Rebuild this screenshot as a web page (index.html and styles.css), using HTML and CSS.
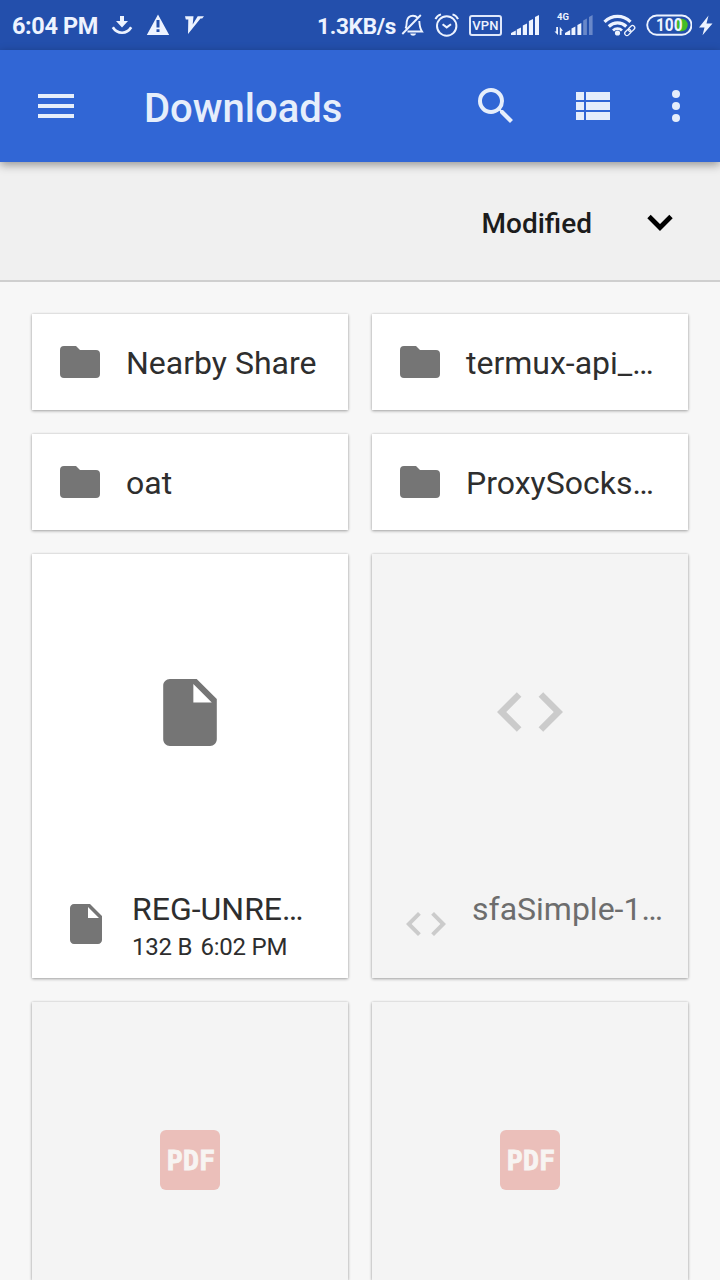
FILE: index.html
```html
<!DOCTYPE html>
<html lang="en">
<head>
<meta charset="utf-8">
<title>Downloads</title>
<link rel="stylesheet" href="styles.css">
</head>
<body>
<svg class="defs" width="0" height="0" aria-hidden="true">
  <symbol id="folder" viewBox="0 0 40 32"><path d="M4 0h12l4 4h16a4 4 0 0 1 4 4v20a4 4 0 0 1-4 4H4a4 4 0 0 1-4-4V4a4 4 0 0 1 4-4z"/></symbol>
  <symbol id="file" viewBox="4 2 16 20"><path d="M6 2c-1.100 0-2 .9-2 2v16c0 1.100.9 2 2 2h12c1.100 0 2-.9 2-2V8l-6-6H6zm7 7V3.500L18.500 9H13z"/></symbol>
  <symbol id="code" viewBox="2 6 20 12"><path d="M9.400 16.600 4.800 12l4.600-4.600L8 6l-6 6 6 6 1.400-1.400zm5.200 0 4.600-4.600-4.600-4.600L16 6l6 6-6 6-1.400-1.400z"/></symbol>
</svg>

<header class="status">
  <span class="time">6:04 PM</span>
  <svg class="download" width="22" height="22" viewBox="111 14 22 22"><path d="M120 16h4v5h4l-6 6.500-6-6.500h4z" fill="currentColor"/><path d="M112.800 27.300c4.500 7.200 14 7.200 18.400 0" fill="none" stroke="currentColor" stroke-width="2.600"/></svg>
  <svg class="warning" width="24" height="22" viewBox="146 14 24 22"><path fill-rule="evenodd" d="M158 14.500 169.200 35H146.800zM156.500 20v7.500h3V20zm0 9.200V32h3v-2.800z" fill="currentColor"/></svg>
  <svg class="vee" width="22" height="22" viewBox="183 14 22 22"><path d="M185 16.200h8.500l-.8 8.300 5-8.300h6.300l-1.800 2.200h-1.700L188 34l.3-14.500h-2.500z" fill="currentColor"/></svg>

  <span class="speed">1.3KB/s</span>
  <svg class="bell" width="24" height="24" viewBox="401 13 24 24" fill="none" stroke="currentColor" stroke-width="1.900"><path d="M405.500 28.500c1.300-2 1-4.500 1.300-7 .5-3.500 3-5.700 6.200-5.700 2 0 3.500.8 4.500 1.900M419.300 21c.3 4 .3 7 2.700 10.500h-14.500M402.300 34l18.500-19"/><path d="M410.200 33.500h5.800c-.5 3-5.300 3-5.800 0z" fill="currentColor" stroke="none"/></svg>
  <svg class="alarm" width="26" height="26" viewBox="434 12 26 26" fill="none" stroke="currentColor" stroke-width="2"><circle cx="446.700" cy="26" r="9.700"/><path d="m442.600 24.200 4.100 3.200 4.300-3.200M435.500 19.200c1-2.500 2.800-4 5.500-4.800M458 19.200c-1-2.500-2.800-4-5.500-4.800"/></svg>
  <span class="vpn">VPN</span>
  <svg class="signal" width="30" height="22" viewBox="510 14 30 22" fill="currentColor"><path d="M511 35v-2l4.800-2.500V35zM516.800 29.500l4.200-2V35h-4.200zM522.800 25.500l4.200-2V35h-4.200zM528.900 21l4.100-2V35h-4.100zM535 17l4-2v20h-4z"/></svg>
  <svg class="signal2" width="40" height="24" viewBox="554 12 40 24" fill="currentColor"><text x="557" y="20.300" font-size="9.500" font-weight="700">4G</text><path d="M565 35v-2l5.200-3v5zM571.500 28.500l3.900-2V35h-3.900zM577.400 25l3.900-2V35h-3.900z"/><path d="M583.200 20.500l3.700-2V35h-3.700zM589 17l3.600-2v20H589z" opacity=".35"/><path d="M556.200 27h1.800v8l-3.500-3.500h1.700zM559.800 35h1.700v-4.300h1.500l-3.200-4z"/></svg>
  <svg class="wifi" width="34" height="24" viewBox="603 13 34 24" fill="none" stroke="currentColor" stroke-width="3.200"><path d="M604.500 21.800c7.500-7.200 18.500-7.200 26 0M608.800 26.500c5-4.800 12.500-4.800 17.500 0"/><path d="M613 30.500c2.500-2.500 6.500-2.500 9 0" stroke-width="2.800"/><circle cx="617.500" cy="33" r="2.600" fill="currentColor" stroke="none"/><g stroke-width="1.300" transform="rotate(-45 629.500 30.500)"><rect x="623.500" y="28.500" width="7" height="4.400" rx="2.200"/><rect x="628.800" y="28.500" width="7" height="4.400" rx="2.200"/></g></svg>
  <svg class="battery" width="46" height="22" viewBox="646 14 46 22"><path d="M677 18.800h4.500a6.200 6.200 0 0 1 0 12.400H677z" fill="#44bd25"/><rect x="647.200" y="15.500" width="44.300" height="19.200" rx="9.600" fill="none" stroke="currentColor" stroke-width="1.900"/><text x="656" y="31.200" font-size="18" font-weight="700" textLength="26.500" lengthAdjust="spacingAndGlyphs" fill="currentColor">100</text></svg>
  <svg class="bolt" width="14" height="22" viewBox="699 14 14 22"><path d="m708.500 15.500-9.500 12h5.500l-2 7.700 10-11.700h-6z" fill="currentColor"/></svg>
</header>

<header class="appbar">
  <svg class="menu" width="36" height="24" viewBox="0 0 36 24"><path d="M0 0h36v4H0zM0 10h36v4H0zM0 20h36v4H0z"/></svg>
  <h1>Downloads</h1>
  <svg class="search" width="36" height="36" viewBox="3 3 18 18"><path d="M15.500 14h-.79l-.28-.27A6.471 6.471 0 0 0 16 9.500 6.500 6.500 0 1 0 9.500 16c1.610 0 3.090-.59 4.230-1.570l.27.280v.79l5 4.990L20.490 19l-4.990-5zm-6 0C7.010 14 5 11.990 5 9.500S7.010 5 9.500 5 14 7.010 14 9.500 11.990 14 9.500 14z"/></svg>
  <svg class="list" width="34" height="28" viewBox="0 0 34 28"><path d="M0 0h8v8H0zM10 0h24v8H10zM0 10h8v8H0zM10 10h24v8H10zM0 20h8v8H0zM10 20h24v8H10z"/></svg>
  <svg class="more" width="8" height="32" viewBox="0 0 8 32"><circle cx="4" cy="4" r="4"/><circle cx="4" cy="16" r="4"/><circle cx="4" cy="28" r="4"/></svg>
</header>

<div class="sortbar">
  <span class="sort-label">Modified</span>
  <svg class="chevron" width="26" height="18" viewBox="0 0 26 18"><path d="m2 2.500 11 11 11-11" fill="none" stroke="#000" stroke-width="4.800"/></svg>
</div>

<main class="grid">
  <div class="card folder"><svg width="40" height="32"><use href="#folder"/></svg><span class="name">Nearby Share</span></div>
  <div class="card folder"><svg width="40" height="32"><use href="#folder"/></svg><span class="name">termux-api_…</span></div>
  <div class="card folder"><svg width="40" height="32"><use href="#folder"/></svg><span class="name">oat</span></div>
  <div class="card folder"><svg width="40" height="32"><use href="#folder"/></svg><span class="name">ProxySocks…</span></div>

  <div class="card doc">
    <div class="thumb"><svg width="54" height="67"><use href="#file"/></svg></div>
    <div class="info">
      <div class="mini"><svg width="32" height="40"><use href="#file"/></svg></div>
      <div class="text"><div class="name">REG-UNRE…</div><div class="meta"><span>132 B</span><span>6:02 PM</span></div></div>
    </div>
  </div>
  <div class="card doc disabled">
    <div class="thumb"><svg width="66" height="40"><use href="#code"/></svg></div>
    <div class="info">
      <div class="mini"><svg width="40" height="24"><use href="#code"/></svg></div>
      <div class="text"><div class="name">sfaSimple-1…</div></div>
    </div>
  </div>
  <div class="card partial disabled"><span class="pdf">PDF</span></div>
  <div class="card partial disabled"><span class="pdf">PDF</span></div>
</main>
</body>
</html>
```
FILE: styles.css
```css
* { box-sizing: border-box; }
body {
  margin: 0;
  width: 720px;
  height: 1280px;
  overflow: hidden;
  background: #f7f7f7;
  color: #2e2e2e;
  font-family: Roboto, "Noto Sans", sans-serif;
}
svg { display: block; flex: none; }
.defs { position: absolute; }

.status {
  display: flex;
  align-items: flex-start;
  height: 50px;
  background: #234fac;
  color: #edf3ff;
}
.status svg { margin-top: 14px; font-family: Roboto, sans-serif; }
.time, .speed {
  flex: none;
  font-weight: 700;
  line-height: 28px;
  margin-top: 12px;
  white-space: nowrap;
}
.time { width: 99px; padding-left: 12px; font-size: 23.5px; letter-spacing: -.4px; }
.status .download { margin-left: 12px; }
.status .warning { margin-left: 13px; }
.status .vee { margin-left: 13px; }
.speed { width: 84px; margin-left: 112px; font-size: 22.5px; letter-spacing: -.25px; }
.status .bell { margin-top: 13px; }
.status .alarm { margin: 12px 0 0 9px; }
.vpn {
  flex: none;
  width: 33px;
  height: 21px;
  margin: 15px 0 0 9px;
  border: 2px solid #dfe8fb;
  border-radius: 3px;
  font-size: 13px;
  font-weight: 500;
  letter-spacing: .2px;
  line-height: 18px;
  text-align: center;
}
.status .signal { margin-left: 8px; }
.status .signal2 { margin: 12px 0 0 14px; }
.status .wifi { margin: 13px 0 0 9px; }
.status .battery { margin-left: 9px; }
.status .bolt { margin-left: 7px; }

.appbar {
  position: relative;
  display: flex;
  align-items: flex-start;
  height: 112px;
  background: #3166d5;
  color: #e6eefb;
  fill: #e6eefb;
  box-shadow: 0 3px 9px rgba(0, 0, 0, .38);
}
.menu { margin: 44px 0 0 38px; }
.appbar h1 {
  flex: none;
  width: 334px;
  margin: 35px 0 0 70px;
  font-size: 40px;
  font-weight: 500;
  line-height: 48px;
}
.search { margin: 38px 0 0 0; }
.list { margin: 42px 0 0 62px; }
.more { margin: 40px 0 0 62px; }

.sortbar {
  display: flex;
  align-items: center;
  justify-content: flex-end;
  height: 120px;
  padding-right: 47px;
  background: #f0f0f0;
  border-bottom: 2px solid #cfcfcf;
}
.sort-label {
  margin: 4px 55px 0 0;
  color: #1c1c1c;
  font-size: 28px;
  font-weight: 500;
}
.chevron { margin-top: 4px; }

.grid {
  display: grid;
  grid-template-columns: 316px 316px;
  gap: 24px;
  padding: 32px 32px 0;
}
.card {
  background: #fff;
  fill: #757575;
  box-shadow: 0 1px 3px rgba(0, 0, 0, .32), 0 0 2px rgba(0, 0, 0, .12);
}
.folder {
  display: flex;
  align-items: center;
  height: 96px;
  padding-left: 28px;
}
.name {
  font-size: 32px;
  line-height: 38px;
  white-space: nowrap;
}
.folder .name { margin: 2px 0 0 26px; }
.doc { height: 424px; }
.thumb {
  display: flex;
  align-items: center;
  justify-content: center;
  height: 316px;
}
.info { display: flex; height: 108px; }
.mini {
  display: flex;
  align-items: center;
  justify-content: center;
  width: 100px;
  height: 108px;
  padding-left: 8px;
}
.text { padding-top: 20px; }
.meta {
  display: flex;
  gap: 8px;
  font-size: 24px;
  letter-spacing: -.2px;
  line-height: 28px;
  margin-top: 5px;
}
.partial {
  display: flex;
  justify-content: center;
  height: 278px;
  padding-top: 128px;
}
.disabled { background: #f4f4f4; fill: #cbcbcb; color: #6d6d6d; }
.pdf {
  width: 60px;
  height: 60px;
  border-radius: 6px;
  background: #ebbfba;
  color: #f7f4f2;
  font: 700 27px/61px "DejaVu Sans Mono", monospace;
  -webkit-text-stroke: .8px #f7f4f2;
  text-align: center;
  padding-left: 2px;
}
```
